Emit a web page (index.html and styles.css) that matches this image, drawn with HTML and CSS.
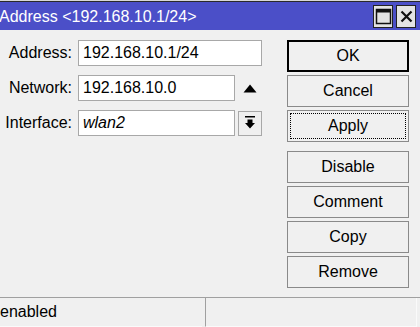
FILE: index.html
```html
<!DOCTYPE html>
<html>
<head>
<meta charset="utf-8">
<link rel="stylesheet" href="styles.css">
</head>
<body>
<div class="win">
  <div class="topstrip"></div>
  <div class="titlebar">
    <span class="title">Address &lt;192.168.10.1/24&gt;</span>
    <div class="tbtns">
      <div class="tbtn">
        <svg width="17" height="17" viewBox="0 0 17 17"><rect x="1.5" y="1.5" width="14" height="14" fill="none" stroke="#111" stroke-width="1.5"/><rect x="1.5" y="1.5" width="14" height="3" fill="#111"/></svg>
      </div>
      <div class="tbtn">
        <svg width="17" height="17" viewBox="0 0 17 17"><path d="M3.5 3.5 L13.5 13.5 M13.5 3.5 L3.5 13.5" stroke="#111" stroke-width="2.2"/></svg>
      </div>
    </div>
  </div>
  <div class="content">
    <div class="form">
      <div class="row">
        <label class="lbl">Address:</label>
        <div class="input wide">192.168.10.1/24</div>
      </div>
      <div class="row">
        <label class="lbl">Network:</label>
        <div class="input">192.168.10.0</div>
        <div class="uparrow">
          <svg width="14" height="9" viewBox="0 0 14 9"><path d="M7 0.5 L13.5 8.5 L0.5 8.5 Z" fill="#000"/></svg>
        </div>
      </div>
      <div class="row">
        <label class="lbl">Interface:</label>
        <div class="input ital">wlan2</div>
        <div class="ddbtn">
          <svg width="12" height="14" viewBox="0 0 12 14"><rect x="1" y="0" width="10" height="1.5" fill="#000"/><path d="M3.5 3.5 H8.5 V7 H11 L6 12.5 L1 7 H3.5 Z" fill="#000"/></svg>
        </div>
      </div>
    </div>
    <div class="buttons">
      <div class="btn default">OK</div>
      <div class="btn">Cancel</div>
      <div class="btn focus"><span class="focusrect">Apply</span></div>
      <div class="btn sep">Disable</div>
      <div class="btn">Comment</div>
      <div class="btn">Copy</div>
      <div class="btn">Remove</div>
    </div>
  </div>
  <div class="status">
    <div class="pane left">enabled</div>
    <div class="pane right"></div>
  </div>
</div>
</body>
</html>
```
FILE: styles.css
```css
html, body {
  margin: 0;
  padding: 0;
  background: #f0f0f0;
}
body {
  font-family: "Liberation Sans", Arial, sans-serif;
  font-size: 16px;
  color: #000;
  width: 420px;
  height: 327px;
  overflow: hidden;
}
.win {
  display: flex;
  flex-direction: column;
  height: 327px;
}
.topstrip {
  height: 1px;
  background: #d8d8d8;
  border-bottom: 1px solid #2a2a2a;
}
.titlebar {
  height: 28px;
  background: #4b4fc8;
  display: flex;
  align-items: center;
  justify-content: space-between;
}
.title {
  color: #fff;
  font-size: 16px;
  margin-left: -1px;
  padding-top: 1px;
}
.tbtns {
  display: flex;
  gap: 3px;
  margin-right: 4px;
}
.tbtn {
  width: 18px;
  height: 21px;
  background: #e3e3e3;
  border: 1px solid #222;
  display: flex;
  align-items: center;
  justify-content: center;
}
.tbtn:first-child {
  width: 18px;
}
.content {
  display: flex;
  padding-top: 10px;
  height: 257px;
}
.form {
  display: flex;
  flex-direction: column;
  gap: 9px;
  width: 287px;
}
.row {
  display: flex;
  align-items: center;
  height: 26px;
}
.lbl {
  width: 72px;
  text-align: right;
  margin-right: 6px;
}
.input {
  box-sizing: border-box;
  width: 157px;
  height: 26px;
  background: #fff;
  border: 1px solid #a8a8a8;
  padding-left: 4px;
  line-height: 24px;
}
.input.wide {
  width: 184px;
}
.input.ital {
  font-style: italic;
}
.uparrow {
  width: 27px;
  display: flex;
  justify-content: center;
  padding-top: 1px;
}
.uparrow svg {
  margin-left: 2px;
}
.ddbtn {
  box-sizing: border-box;
  width: 24px;
  height: 25px;
  margin-left: 3px;
  border: 1px solid #a8a8a8;
  background: #f0f0f0;
  display: flex;
  align-items: center;
  justify-content: center;
}
.buttons {
  display: flex;
  flex-direction: column;
  gap: 3px;
  width: 122px;
}
.btn {
  box-sizing: border-box;
  height: 32px;
  border: 1px solid #8a8a8a;
  background: #f0f0f0;
  display: flex;
  align-items: center;
  justify-content: center;
}
.btn.default {
  border: 2px solid #000;
}
.btn.focus {
  padding: 2px;
}
.focusrect {
  flex: 1;
  align-self: stretch;
  display: flex;
  align-items: center;
  justify-content: center;
  border: 1px dotted #000;
}
.btn.sep {
  margin-top: 6px;
}
.status {
  display: flex;
  gap: 3px;
  height: 29px;
  border-top: 1px solid #a0a0a0;
  padding-right: 3px;
}
.pane {
  box-sizing: border-box;
  height: 29px;
  border-bottom: 1px solid #fafafa;
}
.pane.left {
  width: 202px;
  line-height: 28px;
}
.pane.right {
  flex: 1;
  border-left: 1px solid #a0a0a0;
  border-right: 1px solid #fafafa;
}
```
